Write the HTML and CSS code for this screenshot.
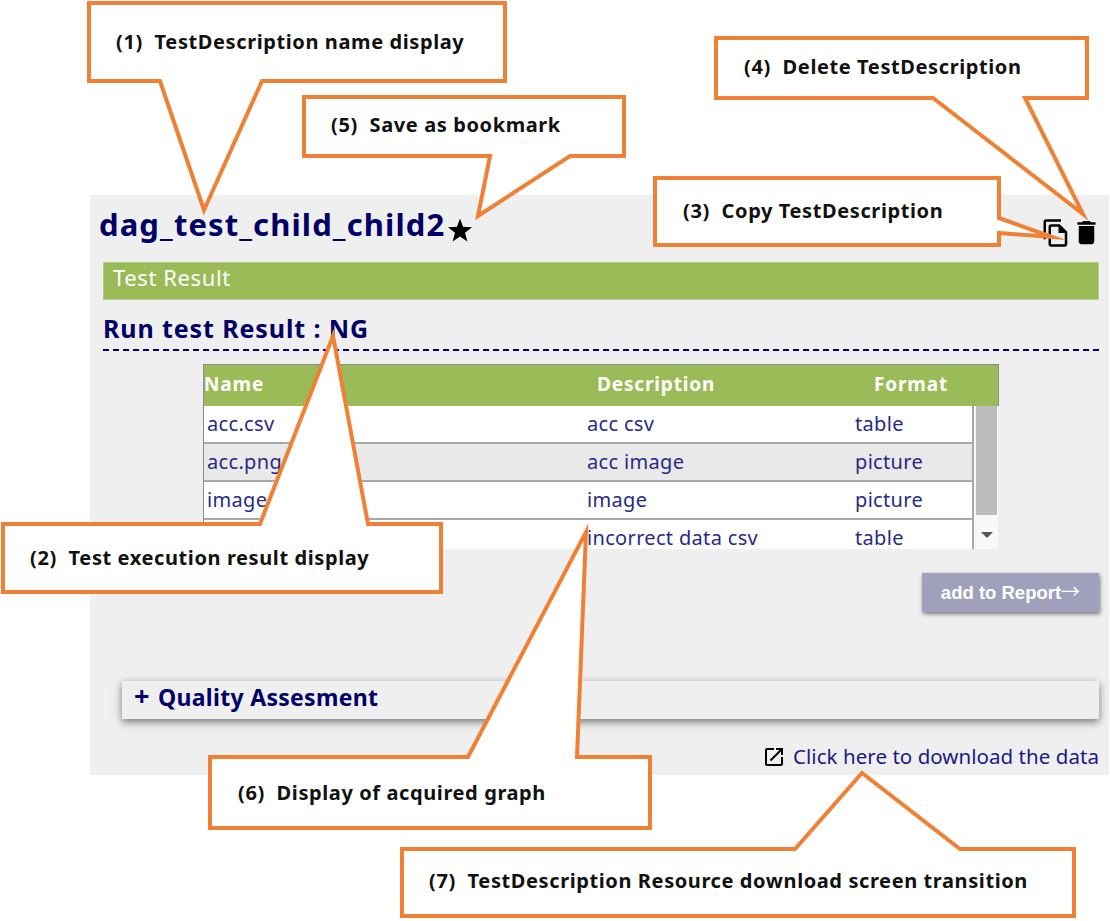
FILE: index.html
```html
<!DOCTYPE html>
<html lang="en">
<head>
<meta charset="utf-8">
<title>TestDescription detail</title>
<link rel="stylesheet" href="styles.css">
</head>
<body>
<main class="panel">
  <header class="title-row">
    <h1 class="title">dag_test_child_child2</h1>
    <svg class="star" viewBox="0 0 24 24"><polygon points="12,0.5 15,8.8 24,9.2 17,14.8 19.4,23.5 12,18.6 4.6,23.5 7,14.8 0,9.2 9,8.8"/></svg>
    <div class="actions">
      <svg class="icon-copy" viewBox="0 0 24 24"><path d="M16 1H4c-1.1 0-2 .9-2 2v14h2V3h12V1zm-1 4H8c-1.1 0-1.99.9-1.99 2L6 21c0 1.1.89 2 1.99 2H19c1.1 0 2-.9 2-2V11l-6-6zM8 21V7h6v5h5v9H8z"/></svg>
      <svg class="icon-delete" viewBox="0 0 24 24"><path d="M6 19c0 1.1.9 2 2 2h8c1.1 0 2-.9 2-2V7H6v12zM19 4h-3.5l-1-1h-5l-1 1H5v2h14V4z"/></svg>
    </div>
  </header>
  <h2 class="section-bar">Test Result</h2>
  <h3 class="run-result">Run test Result : NG</h3>
  <section class="files">
    <div class="files-head">
      <span class="col-name">Name</span>
      <span class="col-desc">Description</span>
      <span class="col-format">Format</span>
    </div>
    <div class="files-body">
      <div class="rows">
        <div class="row"><span class="cell-name">acc.csv</span><span class="cell-desc">acc csv</span><span class="cell-format">table</span></div>
        <div class="row alt"><span class="cell-name">acc.png</span><span class="cell-desc">acc image</span><span class="cell-format">picture</span></div>
        <div class="row"><span class="cell-name">image</span><span class="cell-desc">image</span><span class="cell-format">picture</span></div>
        <div class="row"><span class="cell-name"></span><span class="cell-desc">incorrect data csv</span><span class="cell-format">table</span></div>
      </div>
      <div class="scrollbar">
        <div class="thumb"></div>
        <div class="arrow"></div>
      </div>
    </div>
  </section>
  <div class="report-row"><button class="report-btn">add to Report<span class="report-arrow">→</span></button></div>
  <div class="accordion"><span class="accordion-plus">+</span> Quality Assesment</div>
  <div class="download">
    <svg class="icon-open" viewBox="0 0 24 24"><path d="M19 19H5V5h7V3H5c-1.11 0-2 .9-2 2v14c0 1.1.89 2 2 2h14c1.1 0 2-.9 2-2v-7h-2v7zM14 3v2h3.59l-9.83 9.83 1.41 1.41L19 6.41V10h2V3h-7z"/></svg>
    <a class="download-link">Click here to download the data</a>
  </div>
</main>
<svg class="callouts" width="1110" height="921" viewBox="0 0 1110 921">
  <polygon class="callout" points="89,3 505,3 505,81 262,81 204,210 160,81 89,81"/>
  <text class="callout-text" x="116" y="49">(1)<tspan dx="6"> TestDescription name display</tspan></text>
  <polygon class="callout" points="304,97 624,97 624,156 570,156 478,216 490,156 304,156"/>
  <text class="callout-text" x="331" y="132">(5)<tspan dx="6"> Save as bookmark</tspan></text>
  <polygon class="callout" points="716,38 1087,38 1087,98 1025,98 1083,214 933,98 716,98"/>
  <text class="callout-text" x="744" y="74">(4)<tspan dx="6"> Delete TestDescription</tspan></text>
  <polygon class="callout" points="655,178 999,178 999,218 1052,237 999,233 999,245 655,245"/>
  <text class="callout-text" x="683" y="218">(3)<tspan dx="6"> Copy TestDescription</tspan></text>
  <polygon class="callout" points="3,524 260,524 333,336 368,524 441,524 441,592 3,592"/>
  <text class="callout-text" x="30" y="565">(2)<tspan dx="6"> Test execution result display</tspan></text>
  <polygon class="callout" points="210,757 468,757 586,532 577,757 650,757 650,828 210,828"/>
  <text class="callout-text" x="238" y="800">(6)<tspan dx="6"> Display of acquired graph</tspan></text>
  <polygon class="callout" points="402,849 795,849 862,773 960,849 1074,849 1074,916 402,916"/>
  <text class="callout-text" x="429" y="888">(7)<tspan dx="6"> TestDescription Resource download screen transition</tspan></text>
</svg>
</body>
</html>
```
FILE: styles.css
```css
* { box-sizing: border-box; }
html, body { margin: 0; padding: 0; background: #fff; }
body {
  width: 1110px;
  height: 921px;
  padding: 195px 1px 0 90px;
  position: relative;
  overflow: hidden;
  font-family: "Noto Sans", sans-serif;
}
.panel {
  height: 580px;
  background: #efefef;
  padding: 0 10px 0 13px;
  display: flex;
  flex-direction: column;
}
.title-row {
  display: flex;
  align-items: flex-start;
  height: 67px;
  margin-left: -4px;
}
.title {
  margin: 10px 0 0;
  font-size: 31px;
  line-height: 38px;
  font-weight: 700;
  letter-spacing: 1.1px;
  color: #000066;
}
.star { width: 24px; height: 24px; margin: 23px 0 0 3px; fill: #000; }
.actions { margin-left: auto; display: flex; margin-top: 20px; margin-right: -3px; }
.icon-copy { width: 30px; height: 30px; margin-top: 3px; fill: #000; }
.icon-delete { width: 31px; height: 31px; margin-top: 2px; fill: #000; }
.section-bar {
  margin: 0;
  height: 38px;
  background: #9bbb59;
  border: 1px solid #b5cc85;
  padding-left: 9px;
  color: #fff;
  font-size: 22px;
  letter-spacing: .6px;
  font-weight: 400;
  line-height: 28px;
}
.run-result {
  margin: 0;
  height: 51px;
  padding-top: 12px;
  border-bottom: 2px dashed #000066;
  color: #000066;
  font-size: 25px;
  letter-spacing: .9px;
  line-height: 32px;
  font-weight: 700;
}
.files { margin: 13px 100px 0; }
.files-head {
  display: flex;
  height: 42px;
  background: #9bbb59;
  border: 1px solid #8a8a8a;
  border-bottom: 0;
  color: #fff;
  font-size: 19px;
  letter-spacing: .85px;
  font-weight: 700;
  line-height: 38px;
}
.col-name { width: 393px; }
.col-desc { width: 277px; }
.files-body { display: flex; height: 143px; overflow: hidden; }
.rows { width: 771px; border-left: 1px solid #8a8a8a; border-right: 2px solid #a8a8a8; background: #fff; }
.row {
  display: flex;
  height: 38px;
  border-bottom: 2px solid #a8a8a8;
  color: #2a2a86;
  font-size: 20px;
  letter-spacing: .33px;
  line-height: 36px;
  padding-left: 3px;
}
.row.alt { background: #e9e9e9; }
.cell-name { width: 380px; }
.cell-desc { width: 268px; }
.scrollbar { width: 24px; padding: 0 1px 0 2px; background: #f8f8f8; }
.thumb { height: 109px; background: #bdbdbd; }
.arrow {
  width: 0;
  height: 0;
  margin: 17px 0 0 5px;
  border: 6px solid transparent;
  border-top: 6px solid #555;
  border-bottom: 0;
}
.report-row { display: flex; justify-content: flex-end; margin-top: 24px; }
.report-btn {
  width: 177px;
  height: 39px;
  border: 0;
  padding: 0 0 4px;
  background: #a0a0bd;
  box-shadow: 1px 2px 4px #777;
  color: #fff;
  font-family: "Liberation Sans", sans-serif;
  font-size: 18.5px;
  font-weight: 700;
}
.report-arrow { font-family: "Noto Sans CJK JP", sans-serif; font-weight: 400; font-size: 19px; }
.accordion {
  margin: 69px 0 0 19px;
  height: 38px;
  padding-left: 12px;
  background: #efefef;
  box-shadow: 0 3px 8px #777;
  color: #000066;
  font-size: 23px;
  letter-spacing: .3px;
  font-weight: 700;
  line-height: 33px;
}
.accordion-plus { font-size: 27px; line-height: 1; margin-right: 2px; }
.download {
  display: flex;
  justify-content: flex-end;
  align-items: center;
  margin-top: 23px;
  gap: 7px;
}
.icon-open { width: 24px; height: 24px; fill: #000; }
.download-link { color: #1a1a86; font-size: 20.5px; letter-spacing: .05px; line-height: 28px; padding-bottom: 2px; }
.callouts { position: absolute; left: 0; top: 0; }
.callout { fill: #fff; stroke: #f08034; stroke-width: 4; stroke-miterlimit: 10; }
.callout-text { fill: #111; font-size: 20px; letter-spacing: .6px; font-weight: 700; font-family: "Noto Sans", sans-serif; }
```
